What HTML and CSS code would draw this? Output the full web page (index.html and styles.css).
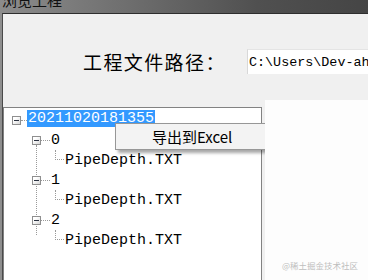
FILE: index.html
```html
<!DOCTYPE html>
<html>

<head>
    <title>浏览工程</title>
    <link rel="stylesheet" href="styles.css">
</head>

<body>
    <div class="window">
        <div class="titlebar">
            <span class="title">浏览工程</span>
        </div>
        <div class="frame">
            <div class="client">
                <div class="path-row">
                    <label class="path-label" for="path">工程文件路径：</label>
                    <input class="path-box" id="path" type="text" value="C:\Users\Dev-ahk\Desktop">
                </div>

                <div class="bottom">
                    <div class="tree">
                        <div class="row lvl0">
                            <span class="exp"></span>
                            <span class="hline short"></span>
                            <span class="label sel">20211020181355</span>
                        </div>
                        <div class="kids">
                            <div class="row lvl1">
                                <span class="exp"></span>
                                <span class="hline"></span>
                                <span class="label">0</span>
                            </div>
                            <div class="row lvl2">
                                <span class="corner"></span>
                                <span class="label">PipeDepth.TXT</span>
                            </div>
                            <div class="row lvl1">
                                <span class="exp"></span>
                                <span class="hline"></span>
                                <span class="label">1</span>
                            </div>
                            <div class="row lvl2">
                                <span class="corner"></span>
                                <span class="label">PipeDepth.TXT</span>
                            </div>
                            <div class="row lvl1">
                                <span class="exp"></span>
                                <span class="hline"></span>
                                <span class="label">2</span>
                            </div>
                            <div class="row lvl2">
                                <span class="corner"></span>
                                <span class="label">PipeDepth.TXT</span>
                            </div>
                        </div>

                        <div class="menu">
                            <div class="menu-item">导出到Excel</div>
                        </div>
                    </div>
                    <div class="side">
                        <span class="watermark">@稀土掘金技术社区</span>
                    </div>
                </div>
            </div>
        </div>
    </div>
</body>

</html>
```

FILE: styles.css
```css
body {
    margin: 0;
    padding: 0;
    width: 368px;
    height: 280px;
    overflow: hidden;
    font-family: "Noto Sans CJK SC", sans-serif;
}

.window {
    display: flex;
    flex-direction: column;
    height: 280px;
}

.titlebar {
    height: 13px;
    overflow: hidden;
    background: linear-gradient(90deg, #8c8c8c 0%, #6e6e6e 35%, #505050 70%, #454545 100%);
}

.title {
    display: block;
    margin-top: -9px;
    padding-left: 2px;
    font-size: 15px;
    line-height: 18px;
    color: #111;
}

.frame {
    flex: 1;
    display: flex;
    border-left: 2px solid #8e8e8e;
    background-color: #8e8e8e;
}

.client {
    flex: 1;
    display: flex;
    flex-direction: column;
    background-color: #f0f0f0;
    border-top: 1px solid #2e2e2e;
    border-left: 1px solid #4a4a4a;
    min-width: 0;
    overflow: hidden;
}

.path-row {
    display: flex;
    align-items: center;
    height: 25px;
    margin-top: 35px;
    padding-left: 80px;
}

.path-label {
    flex: none;
    width: 164px;
    font-size: 19px;
    letter-spacing: 1.4px;
    line-height: 25px;
    color: #000;
}

.path-box {
    flex: none;
    width: 150px;
    height: 25px;
    margin: 0;
    padding: 0 0 0 1px;
    border: none;
    border-left: 1px solid #d8d8d8;
    border-top: 1px solid #e4e4e4;
    box-sizing: border-box;
    background-color: #fff;
    font-family: "Liberation Mono", monospace;
    font-size: 13.4px;
    color: #000;
    outline: none;
}

.bottom {
    flex: 1;
    display: flex;
    margin-top: 26px;
    min-height: 0;
}

.tree {
    position: relative;
    flex: none;
    width: 259px;
    margin-top: 7px;
    padding-top: 2px;
    box-sizing: border-box;
    background-color: #fff;
    border-top: 1px solid #828282;
    border-left: 1px solid #828282;
    border-right: 1px solid #828282;
    font-family: "Liberation Mono", monospace;
    font-size: 15px;
    color: #000;
}

.side {
    position: relative;
    flex: 1;
    margin-left: 3px;
    background-color: #fdfdfd;
}

.row {
    display: flex;
    align-items: center;
    height: 20px;
}

.lvl0 {
    padding-left: 8px;
}

.lvl1 {
    padding-left: 28px;
}

.lvl2 {
    padding-left: 51px;
}

.exp {
    position: relative;
    flex: none;
    width: 9px;
    height: 9px;
    box-sizing: border-box;
    border: 1px solid #8f8f8f;
    background: linear-gradient(135deg, #ffffff 30%, #d6d6d6 100%);
}

.exp::after {
    content: "";
    position: absolute;
    left: 1px;
    top: 3px;
    width: 5px;
    height: 1px;
    background-color: #2a3140;
}

.hline {
    flex: none;
    width: 9px;
    border-top: 1px dotted #9a9a9a;
}

.hline.short {
    width: 6px;
}

.corner {
    flex: none;
    align-self: flex-start;
    width: 9px;
    height: 10px;
    box-sizing: border-box;
    border-left: 1px dotted #9a9a9a;
    border-bottom: 1px dotted #9a9a9a;
}

.label {
    padding: 0 1px;
    height: 17px;
    line-height: 17px;
    white-space: nowrap;
}

.lvl0 .label {
    margin-top: -3px;
}

.sel {
    background-color: #3399ff;
    color: #fff;
}

.kids {
    position: relative;
}

.kids::before {
    content: "";
    position: absolute;
    left: 32px;
    top: 15px;
    bottom: 15px;
    border-left: 1px dotted #9a9a9a;
}

.menu {
    position: absolute;
    left: 111px;
    top: 15px;
    width: 160px;
    height: 27px;
    box-sizing: border-box;
    background-color: #f3f3f3;
    border: 1px solid #979797;
    box-shadow: 3px 3px 3px rgba(0, 0, 0, 0.35);
}

.menu-item {
    padding-left: 36px;
    font-family: "Noto Sans CJK SC", sans-serif;
    font-size: 15px;
    line-height: 25px;
    color: #000;
}

.watermark {
    position: absolute;
    right: 10px;
    bottom: 9px;
    font-size: 8.5px;
    line-height: 12px;
    white-space: nowrap;
    color: #bdbdbd;
}
```
